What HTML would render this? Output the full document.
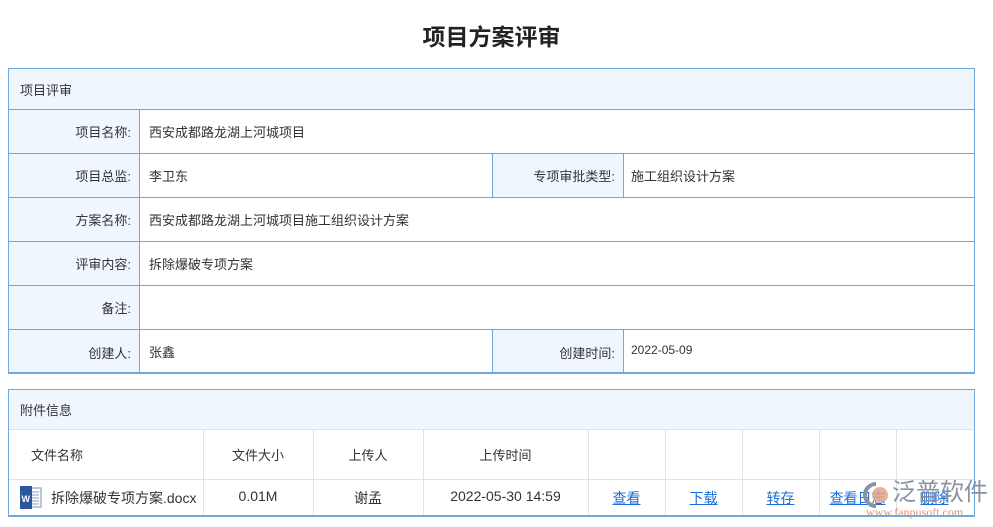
<!DOCTYPE html>
<html><head><meta charset="utf-8"><style>
*{margin:0;padding:0;box-sizing:border-box}
body{width:993px;height:527px;background:#fff;position:relative;overflow:hidden;font-family:"Liberation Sans","Noto Sans CJK SC",sans-serif;font-size:13px;color:#333}
.a{position:absolute;white-space:nowrap}
.t{left:0;width:983px;top:18px;text-align:center;font-size:23px;font-weight:bold;color:#222}
.c{display:flex;align-items:center}
a{color:#1a6fd8;text-decoration:underline}
</style></head><body>
<div class="a t">项目方案评审</div>

<!-- panel 1 -->
<div class="a" style="left:8px;top:68px;width:967px;height:306px;border:1px solid #6fa8dc;border-bottom-width:2px"></div>
<div class="a c" style="left:9px;top:69px;width:965px;height:41px;background:#f0f6fe;padding-left:11px;border-bottom:1px solid #6fa8dc">项目评审</div>
<div class="a" style="left:9px;top:110px;width:131px;height:262px;background:#f0f6fe;border-right:1px solid #6fa8dc"></div>
<div class="a" style="left:492px;top:153px;width:132px;height:44px;background:#f0f6fe;border-left:1px solid #6fa8dc;border-right:1px solid #6fa8dc"></div>
<div class="a" style="left:492px;top:329px;width:132px;height:43px;background:#f0f6fe;border-left:1px solid #6fa8dc;border-right:1px solid #6fa8dc"></div>
<div class="a" style="left:9px;top:153px;width:965px;height:1px;background:#6fa8dc"></div>
<div class="a" style="left:9px;top:197px;width:965px;height:1px;background:#6fa8dc"></div>
<div class="a" style="left:9px;top:241px;width:965px;height:1px;background:#6fa8dc"></div>
<div class="a" style="left:9px;top:285px;width:965px;height:1px;background:#6fa8dc"></div>
<div class="a" style="left:9px;top:329px;width:965px;height:1px;background:#6fa8dc"></div>

<div class="a" style="left:9px;width:122px;top:122px;text-align:right">项目名称:</div>
<div class="a" style="left:149px;top:122px">西安成都路龙湖上河城项目</div>
<div class="a" style="left:9px;width:122px;top:166px;text-align:right">项目总监:</div>
<div class="a" style="left:149px;top:166px">李卫东</div>
<div class="a" style="left:492px;width:123px;top:166px;text-align:right">专项审批类型:</div>
<div class="a" style="left:631px;top:166px">施工组织设计方案</div>
<div class="a" style="left:9px;width:122px;top:210px;text-align:right">方案名称:</div>
<div class="a" style="left:149px;top:210px">西安成都路龙湖上河城项目施工组织设计方案</div>
<div class="a" style="left:9px;width:122px;top:254px;text-align:right">评审内容:</div>
<div class="a" style="left:149px;top:254px">拆除爆破专项方案</div>
<div class="a" style="left:9px;width:122px;top:298px;text-align:right">备注:</div>
<div class="a" style="left:9px;width:122px;top:343px;text-align:right">创建人:</div>
<div class="a" style="left:149px;top:342px">张鑫</div>
<div class="a" style="left:492px;width:123px;top:343px;text-align:right">创建时间:</div>
<div class="a" style="left:631px;top:343px;font-size:12px">2022-05-09</div>

<!-- panel 2 -->
<div class="a" style="left:8px;top:389px;width:967px;height:128px;border:1px solid #6fa8dc;border-bottom-width:2px"></div>
<div class="a c" style="left:9px;top:390px;width:965px;height:40px;background:#f0f6fe;padding-left:11px;border-bottom:1px solid #e2e2e2">附件信息</div>
<div class="a" style="left:9px;top:479px;width:965px;height:1px;background:#e2e2e2"></div>
<div class="a" style="left:203px;top:430px;width:1px;height:85px;background:#e2e2e2"></div>
<div class="a" style="left:313px;top:430px;width:1px;height:85px;background:#e2e2e2"></div>
<div class="a" style="left:423px;top:430px;width:1px;height:85px;background:#e2e2e2"></div>
<div class="a" style="left:588px;top:430px;width:1px;height:85px;background:#e2e2e2"></div>
<div class="a" style="left:665px;top:430px;width:1px;height:85px;background:#e2e2e2"></div>
<div class="a" style="left:742px;top:430px;width:1px;height:85px;background:#e2e2e2"></div>
<div class="a" style="left:819px;top:430px;width:1px;height:85px;background:#e2e2e2"></div>
<div class="a" style="left:896px;top:430px;width:1px;height:85px;background:#e2e2e2"></div>

<div class="a" style="left:31px;top:445px">文件名称</div>
<div class="a" style="left:203px;width:110px;top:445px;text-align:center">文件大小</div>
<div class="a" style="left:313px;width:110px;top:445px;text-align:center">上传人</div>
<div class="a" style="left:423px;width:165px;top:445px;text-align:center">上传时间</div>

<svg class="a" style="left:19px;top:486px" width="24" height="23" viewBox="0 0 24 23"><rect x="8" y="2" width="14" height="19" fill="#fff" stroke="#7a8fb0"/><path d="M11 6h9M11 9h9M11 12h9M11 15h9M11 18h9" stroke="#8aa0c0"/><rect x="1" y="0" width="12" height="23" fill="#2b5699"/><text x="2.5" y="16" font-size="9" fill="#fff" font-family="Liberation Sans" font-weight="bold">W</text></svg>
<div class="a" style="left:51px;top:488px;font-size:14px">拆除爆破专项方案.docx</div>
<div class="a" style="left:203px;width:110px;top:488px;text-align:center;font-size:14px">0.01M</div>
<div class="a" style="left:313px;width:110px;top:488px;text-align:center;font-size:14px">谢孟</div>
<div class="a" style="left:423px;width:165px;top:488px;text-align:center;font-size:14px">2022-05-30 14:59</div>
<div class="a" style="left:588px;width:77px;top:488px;text-align:center;font-size:14px"><a>查看</a></div>
<div class="a" style="left:665px;width:77px;top:488px;text-align:center;font-size:14px"><a>下载</a></div>
<div class="a" style="left:742px;width:77px;top:488px;text-align:center;font-size:14px"><a>转存</a></div>
<div class="a" style="left:819px;width:77px;top:488px;text-align:center;font-size:14px"><a>查看日志</a></div>
<div class="a" style="left:896px;width:77px;top:488px;text-align:center;font-size:14px"><a>删除</a></div>

<!-- watermark -->
<svg class="a" style="left:862px;top:482px" width="30" height="26" viewBox="0 0 30 26"><path d="M14 2A11 11 0 1 0 14 24" stroke="#8a93a6" stroke-width="4" fill="none"/><circle cx="18" cy="13" r="8" fill="#e0a58a" opacity="0.85"/></svg>
<div class="a" style="left:892px;top:479px;font-size:24px;line-height:28px;color:#7d879b;opacity:.9">泛普软件</div>
<div class="a" style="left:866px;top:505px;font-size:12px;color:#d9957a;font-family:'Liberation Serif',serif">www.fanpusoft.com</div>
</body></html>
